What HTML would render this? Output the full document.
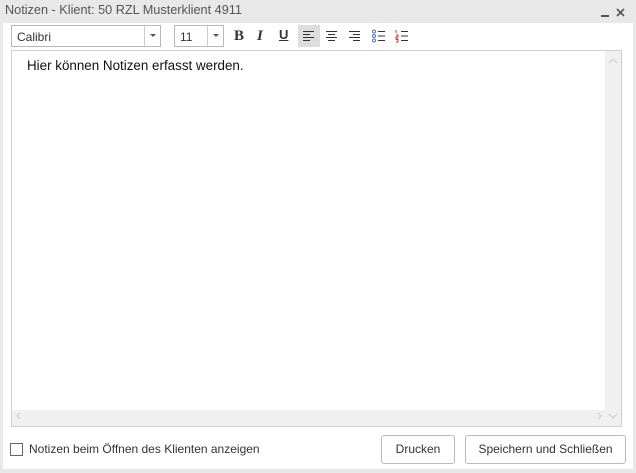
<!DOCTYPE html>
<html><head><style>
*{margin:0;padding:0;box-sizing:border-box}
body{width:636px;height:473px;background:#e8e8e8;font-family:"Liberation Sans",sans-serif;position:relative;overflow:hidden;color:#222}
.a{position:absolute}
.title{left:5px;top:3px;font-size:12.7px;color:#555}
.main{left:3px;top:23px;width:630px;height:446px;background:#fff}
.combo{background:#fff;border:1px solid #b9b9b9;height:22px;font-size:12px;color:#333;padding:4px 0 0 5px}
.dd{position:absolute;right:0;top:0;width:16px;height:20px;border-left:1px solid #ccc}
.dd:after{content:"";position:absolute;left:5px;top:8px;border:3px solid transparent;border-top:3px solid #555}
.tb{font-family:"Liberation Serif",serif;font-weight:bold;font-size:15px;color:#333}
.btn{border:1px solid #bbb;border-radius:3px;background:#fff;font-size:12px;color:#333;text-align:center;line-height:27px}
</style></head><body>
<div class="a title">Notizen - Klient: 50 RZL Musterklient 4911</div>
<svg class="a" style="left:598px;top:7px" width="30" height="12"><path d="M3 9H11" stroke="#555" stroke-width="2"/><path d="M19 2L26 9M26 2L19 9" stroke="#555" stroke-width="1.6"/></svg>
<div class="a main"></div>
<div class="a combo" style="left:11px;top:25px;width:150px">Calibri<span class="dd"></span></div>
<div class="a combo" style="left:174px;top:25px;width:50px">11<span class="dd"></span></div>
<div class="a tb" style="left:234px;top:28px">B</div>
<div class="a tb" style="left:257px;top:28px;font-style:italic">I</div>
<div class="a tb" style="left:279px;top:27px;font-family:'Liberation Sans',sans-serif;text-decoration:underline;font-size:13px">U</div>
<div class="a" style="left:298px;top:25px;width:22px;height:22px;background:#ddd"></div>
<svg class="a" style="left:302px;top:29px" width="110" height="14" stroke="#333" stroke-width="1">
<path d="M1 2.5H12M1 5.5H8M1 8.5H12M1 11.5H8"/>
<path d="M24 2.5H35M26 5.5H33M24 8.5H35M26 11.5H33"/>
<path d="M47 2.5H58M51 5.5H58M47 8.5H58M51 11.5H58"/>
<circle cx="72" cy="2.5" r="1.5" stroke="#4a78c0" fill="none"/><circle cx="72" cy="7" r="1.5" stroke="#4a78c0" fill="none"/><circle cx="72" cy="11.5" r="1.5" stroke="#4a78c0" fill="none"/>
<path d="M76 2.5H83M76 7H83M76 11.5H83"/>
<path d="M94 1V4M94 6H96V8H94V10H96M94 10.5H96V13H94" stroke="#c33" fill="none"/>
<path d="M99 2.5H106M99 7H106M99 11.5H106"/>
</svg>
<div class="a" style="left:11px;top:50px;width:611px;height:377px;border:1px solid #d0d0d0;background:#fff"></div>
<div class="a" style="left:605px;top:51px;width:16px;height:375px;background:#f0f0f0"></div>
<div class="a" style="left:12px;top:410px;width:609px;height:16px;background:#f0f0f0"></div>
<svg class="a" style="left:12px;top:51px" width="610" height="376" stroke="#ccc" fill="none"><path d="M597 12L601 8L605 12M597 363L601 367L605 363M8 362L5 365L8 368M586 362L589 365L586 368"/></svg>
<div class="a" style="left:27px;top:58px;font-size:13.4px;color:#111">Hier können Notizen erfasst werden.</div>
<div class="a" style="left:10px;top:443px;width:13px;height:13px;border:1px solid #666;background:#fff"></div>
<div class="a" style="left:29px;top:442px;font-size:12px;color:#333">Notizen beim Öffnen des Klienten anzeigen</div>
<div class="a btn" style="left:381px;top:435px;width:74px;height:29px">Drucken</div>
<div class="a btn" style="left:465px;top:435px;width:161px;height:29px">Speichern und Schließen</div>
</body></html>
